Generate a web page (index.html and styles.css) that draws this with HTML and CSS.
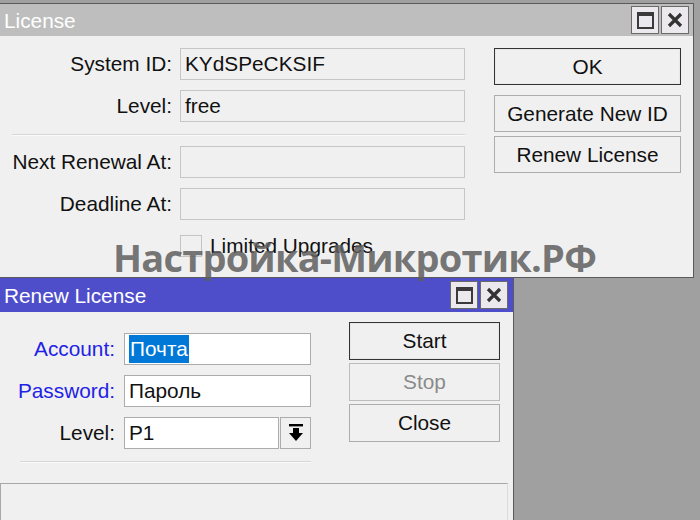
FILE: index.html
```html
<!DOCTYPE html>
<html>
<head>
<meta charset="utf-8">
<link rel="stylesheet" href="styles.css">
</head>
<body>
<div class="desktop">
  <div class="win win-license">
    <div class="titlebar inactive">
      <span class="title">License</span>
      <div class="tbtns">
        <span class="tbtn"><span class="max-ico"></span></span>
        <span class="tbtn"><svg width="16" height="16" viewBox="0 0 16 16"><path d="M2 2 L14 14 M14 2 L2 14" stroke="#333" stroke-width="3.2"/></svg></span>
      </div>
    </div>
    <div class="body lic-body">
      <div class="form lic-form">
        <label class="lbl">System ID:</label>
        <div class="field ro">KYdSPeCKSIF</div>
        <label class="lbl">Level:</label>
        <div class="field ro">free</div>
        <div class="sep lic-sep"></div>
        <label class="lbl">Next Renewal At:</label>
        <div class="field ro"></div>
        <label class="lbl">Deadline At:</label>
        <div class="field ro"></div>
        <div class="chk-row">
          <span class="chk"></span>
          <span class="chk-lbl">Limited Upgrades</span>
        </div>
      </div>
      <div class="btns lic-btns">
        <button class="btn default">OK</button>
        <button class="btn gen">Generate New ID</button>
        <button class="btn">Renew License</button>
      </div>
    </div>
  </div>

  <div class="watermark">Настройка-Микротик.РФ</div>

  <div class="win win-renew">
    <div class="titlebar active">
      <span class="title">Renew License</span>
      <div class="tbtns">
        <span class="tbtn"><span class="max-ico"></span></span>
        <span class="tbtn"><svg width="16" height="16" viewBox="0 0 16 16"><path d="M2 2 L14 14 M14 2 L2 14" stroke="#333" stroke-width="3.2"/></svg></span>
      </div>
    </div>
    <div class="body ren-body">
      <div class="form ren-form">
        <label class="lbl blue">Account:</label>
        <div class="field"><span class="sel">Почта</span></div>
        <label class="lbl blue">Password:</label>
        <div class="field">Пароль</div>
        <label class="lbl">Level:</label>
        <div class="combo">
          <div class="field">P1</div>
          <span class="dd"><svg width="16" height="18" viewBox="0 0 16 18"><rect x="1" y="0" width="14" height="2.4" fill="#000"/><path d="M5 4 H11 V9 H15 L8 17 L1 9 H5 Z" fill="#000"/></svg></span>
        </div>
        <div class="sep ren-sep"></div>
      </div>
      <div class="btns ren-btns">
        <button class="btn default">Start</button>
        <button class="btn disabled">Stop</button>
        <button class="btn">Close</button>
      </div>
    </div>
    <div class="status"></div>
  </div>
</div>
</body>
</html>
```
FILE: styles.css
```css
* { box-sizing: border-box; }
html, body { margin: 0; padding: 0; }
body {
  background: #a0a0a0;
  font-family: "Liberation Sans", Arial, sans-serif;
  font-size: 20.8px;
  color: #111;
}
.desktop {
  position: relative;
  width: 700px;
  height: 520px;
  overflow: hidden;
}
.win {
  position: absolute;
  background: #f0f0f0;
  border: 1px solid #5a5a5a;
  display: flex;
  flex-direction: column;
}
.win-license { left: -1px; top: 3px; width: 695px; height: 275px; }
.win-renew { left: -1px; top: 277px; width: 515px; height: 260px; }

.titlebar {
  display: flex;
  align-items: center;
  justify-content: space-between;
  padding: 0 4px 0 4px;
  flex: none;
}
.titlebar.inactive { background: #bebebe; height: 32px; }
.titlebar.active { background: #4e4ecb; height: 34px; padding-right: 5px; }
.title { color: #fff; font-size: 20.8px; padding-top: 2px; }
.tbtns { display: flex; gap: 2px; }
.tbtn {
  width: 28px;
  height: 28px;
  background: #ebe9ed;
  border: 1px solid #6a6a6a;
  display: flex;
  align-items: center;
  justify-content: center;
}
.max-ico {
  width: 17px;
  height: 17px;
  border: 2px solid #3a3a3a;
  border-top-width: 4px;
}

.body { display: flex; align-items: flex-start; }
.form { display: grid; align-items: center; }
.lbl { text-align: right; white-space: nowrap; }
.lbl.blue { color: #2222e6; }
.field {
  height: 32px;
  border: 1px solid #acacac;
  background: #fff;
  padding: 0 4px;
  display: flex;
  align-items: center;
  white-space: nowrap;
}
.field.ro { background: #f0f0f0; border-color: #c6c6c6; }
.sep { grid-column: 1 / 3; height: 2px; background: #d6d6d6; border-bottom: 1px solid #fafafa; }

.lic-body { padding: 12px 0 0 0; }
.lic-form {
  grid-template-columns: 172px 285px;
  column-gap: 8px;
  row-gap: 10px;
}
.lic-sep { margin: 2px 0 0 12px; }
.chk-row {
  grid-column: 2;
  display: flex;
  align-items: center;
  gap: 8px;
  margin-top: 4px;
  height: 24px;
}
.chk {
  width: 22px;
  height: 22px;
  border: 1px solid #c4c4c4;
  background: #f0f0f0;
}
.btns { display: flex; flex-direction: column; }
.btn {
  font-family: "Liberation Sans", Arial, sans-serif;
  font-size: 20.8px;
  color: #111;
  background: #f0f0f0;
  border: 1px solid #adadad;
  padding: 0;
  height: 37px;
}
.btn.default { border: 1px solid #333; box-shadow: inset 0 0 0 1px #e8e8e8; }
.btn.disabled { color: #8a8a8a; border-color: #bcbcbc; }
.lic-btns { width: 187px; margin-left: 29px; gap: 10px; }
.lic-btns .gen { margin-bottom: -6px; }

.ren-body { flex: none; height: 171px; }
.ren-form {
  margin-top: 21px;
  grid-template-columns: 115px 187px;
  column-gap: 9px;
  row-gap: 10px;
}
.sel { background: #0078d7; color: #fff; line-height: 28px; padding: 0 1px; }
.combo { display: flex; gap: 1px; }
.combo .field { flex: 1; }
.dd {
  width: 31px;
  height: 32px;
  border: 1px solid #acacac;
  background: #f0f0f0;
  display: flex;
  align-items: center;
  justify-content: center;
}
.ren-sep { margin: 2px 0 0 20px; }
.ren-btns { width: 151px; margin-left: 38px; margin-top: 10px; gap: 3px; }
.ren-btns .btn { height: 38px; }
.status {
  flex: 1;
  margin-right: 5px;
  border-top: 1px solid #a8a8a8;
  border-left: 1px solid #a8a8a8;
  border-right: 1px solid #dcdcdc;
}

.watermark {
  position: absolute;
  left: 113px;
  top: 231px;
  font-family: "Open Sans", "DejaVu Sans", sans-serif;
  font-weight: 700;
  font-size: 38px;
  letter-spacing: -0.8px;
  color: rgba(95, 95, 95, 0.85);
  white-space: nowrap;
  pointer-events: none;
  z-index: 1;
}
```
